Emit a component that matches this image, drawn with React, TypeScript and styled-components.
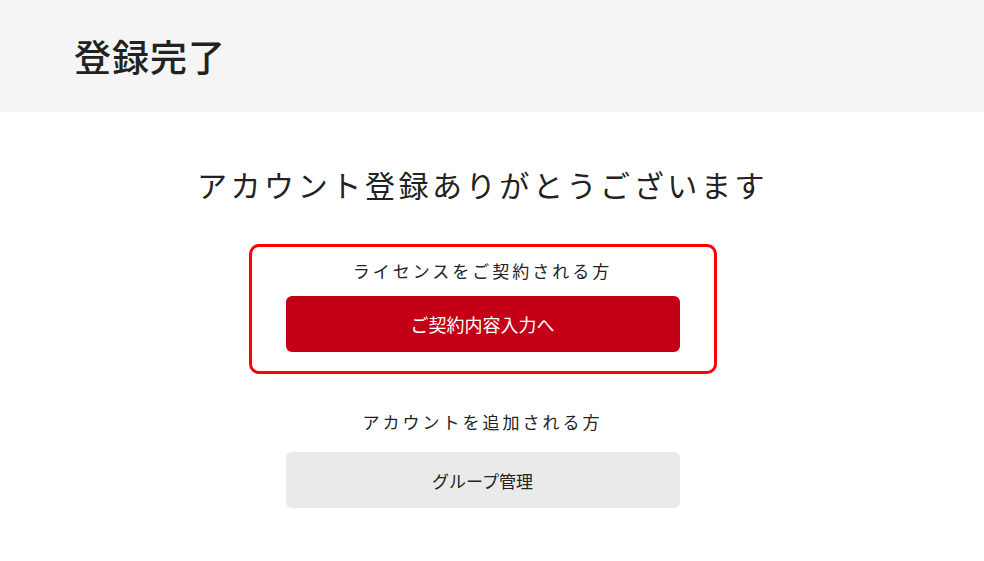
import styled, { createGlobalStyle } from 'styled-components';

const GlobalStyle = createGlobalStyle`
  html, body {
    margin: 0;
    padding: 0;
    background: #ffffff;
  }
  body {
    font-family: "Noto Sans CJK JP", "Noto Sans", sans-serif;
    color: #222222;
  }
`;

const App = () => {
  return (
    <>
      <GlobalStyle />
      <PageHeader>
        <PageTitle>登録完了</PageTitle>
      </PageHeader>
      <Main>
        <Heading>アカウント登録ありがとうございます</Heading>
        <LicenseBox>
          <Label>ライセンスをご契約される方</Label>
          <ActionButton $variant="primary">ご契約内容入力へ</ActionButton>
        </LicenseBox>
        <Section>
          <Label>アカウントを追加される方</Label>
          <ActionButton $variant="secondary">グループ管理</ActionButton>
        </Section>
      </Main>
    </>
  );
};
export default App;

const PageHeader = styled.header`
  background-color: #f5f5f5;
  height: 112px;
  display: flex;
  align-items: center;
  padding-left: 74px;
`;

const PageTitle = styled.h1`
  margin: 0;
  font-size: 37px;
  font-weight: 500;
  letter-spacing: 1px;
  color: #222222;
  line-height: 1;
`;

const Main = styled.main`
  display: flex;
  flex-direction: column;
  align-items: center;
  padding-right: 19px;
  padding-top: 50px;
`;

const Heading = styled.h2`
  margin: 0 0 38px;
  font-size: 30px;
  font-weight: 400;
  letter-spacing: 3.6px;
  line-height: 44px;
  color: #222222;
`;

const LicenseBox = styled.div`
  width: 468px;
  box-sizing: border-box;
  border: 3px solid #ff0000;
  border-radius: 10px;
  padding: 10px 34px 19px;
  display: flex;
  flex-direction: column;
  align-items: center;
  gap: 11px;
`;

const Section = styled.div`
  margin-top: 34px;
  display: flex;
  flex-direction: column;
  align-items: center;
  gap: 16px;
`;

const Label = styled.p`
  margin: 0;
  font-size: 17px;
  letter-spacing: 3px;
  line-height: 28px;
  color: #222222;
`;

const ActionButton = styled.button<{ $variant: 'primary' | 'secondary' }>`
  width: 394px;
  height: 56px;
  border: none;
  border-radius: 6px;
  font-family: inherit;
  font-size: ${(p) => (p.$variant === 'primary' ? '18px' : '17px')};
  cursor: pointer;
  background-color: ${(p) => (p.$variant === 'primary' ? '#c30016' : '#eaeaea')};
  color: ${(p) => (p.$variant === 'primary' ? '#ffffff' : '#222222')};
`;
